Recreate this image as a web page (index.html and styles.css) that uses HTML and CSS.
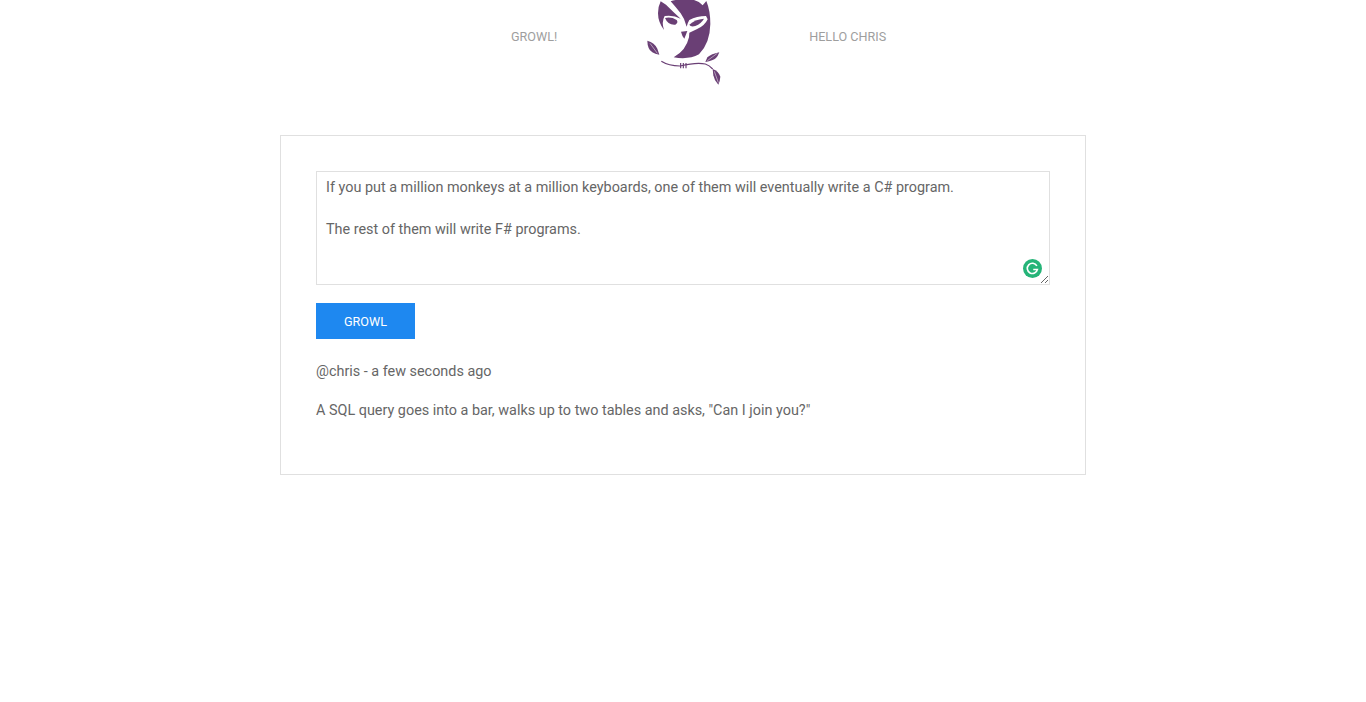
FILE: index.html
```html
<!DOCTYPE html>
<html lang="en">
<head>
  <meta charset="UTF-8">
  <meta name="viewport" content="width=device-width, initial-scale=1">
  <title>Growl</title>
  <link rel="stylesheet" href="styles.css">
</head>
<body>
  <header class="site-header">
    <a class="nav-link" href="#">Growl!</a>
    <svg class="logo" viewBox="0 0 330 285" aria-label="Owl logo">
      <path class="owl" d="M92 4 L108 14 Q130 36 152 56 Q130 44 104 48 Q94 66 102 90 Q84 66 84 40 Q84 20 92 4 Z"/>
      <path class="owl" d="M122 4 Q150 -6 192 0 Q208 4 218 16 L229 3 Q241 32 241 72 Q240 130 207 163 Q176 180 131 172 Q168 152 177 112 L178 98 L200 88 Q224 78 233 58 L228 48 Q200 48 178 60 Q172 70 170 80 Q164 56 152 40 Q138 22 122 4 Z"/>
      <path class="owl" d="M105 54 Q124 50 140 60 Q146 68 136 74 Q114 76 105 54 Z"/>
      <path class="owl" d="M178 74 Q194 58 222 56 Q214 70 196 78 Q182 82 178 74 Z"/>
      <path class="owl" d="M153 95 L172 93 L163 116 Q156 108 153 95 Z"/>
      <path class="owl" d="M52 122 Q74 128 82 146 L88 164 Q62 160 56 144 Q52 134 52 122 Z"/>
      <path class="owl" d="M268 157 Q244 162 232 172 L226 186 Q250 182 258 174 Q264 168 268 157 Z"/>
      <path class="owl" d="M248 207 Q266 214 271 230 Q270 244 265 254 Q252 240 250 226 Z"/>
      <path class="owl-vein" d="M60 130 L82 160 M262 160 L232 182 M253 214 L265 248"/>
      <path class="owl-line" d="M94 184 Q116 198 150 198 Q200 186 226 192 Q238 196 248 207"/>
      <path class="owl-line" d="M152 189 V205 M160 189 V205 M168 189 V205"/>
    </svg>
    <a class="nav-link nav-user" href="#">Hello Chris</a>
  </header>

  <main class="card">
    <form class="growl-form">
      <div class="editor">
        <textarea class="growl-input">If you put a million monkeys at a million keyboards, one of them will eventually write a C# program.

The rest of them will write F# programs.</textarea>
        <svg class="grammarly" viewBox="0 0 20 20" aria-hidden="true">
          <circle cx="10" cy="10" r="10" fill="#25b478"/>
          <path d="M14.6 7.2 A5.4 5.4 0 1 0 15.2 11 H10.8" fill="none" stroke="#fff" stroke-width="1.7"/>
        </svg>
      </div>
      <button class="btn" type="submit">Growl</button>
    </form>

    <p class="post-meta">@chris - a few seconds ago</p>
    <p class="post-body">A SQL query goes into a bar, walks up to two tables and asks, "Can I join you?"</p>
  </main>
</body>
</html>
```

FILE: styles.css
```css
body {
  margin: 0;
  background: #fff;
  color: #666;
  font-family: Roboto, sans-serif;
  font-size: 14.4px;
}

.site-header {
  display: flex;
  align-items: flex-start;
  width: 806px;
  height: 135px;
  margin: 0 auto;
  padding-left: 231px;
  box-sizing: border-box;
}

.nav-link {
  margin-top: 29px;
  color: #9e9e9e;
  font-size: 12.6px;
  line-height: 16px;
  text-decoration: none;
  text-transform: uppercase;
}

.logo {
  width: 110px;
  height: 95px;
  margin: 0 69px 0 73px;
}

.owl {
  fill: #6a3f75;
}

.owl-vein {
  fill: none;
  stroke: #fff;
  stroke-width: 1.5;
}

.owl-line {
  fill: none;
  stroke: #6a3f75;
  stroke-width: 3.5;
}

.card {
  width: 806px;
  height: 340px;
  margin: 0 auto;
  padding: 35px;
  border: 1px solid #e0e0e0;
  box-sizing: border-box;
}

.editor {
  position: relative;
  height: 114px;
}

.growl-input {
  display: block;
  width: 100%;
  height: 114px;
  padding: 5px 9px;
  border: 1px solid #e0e0e0;
  box-sizing: border-box;
  color: #666;
  font-family: Roboto, sans-serif;
  font-size: 14.4px;
  line-height: 21px;
  outline: none;
}

.grammarly {
  position: absolute;
  right: 8px;
  bottom: 7px;
  width: 19px;
  height: 19px;
}

.btn {
  display: block;
  width: 99px;
  height: 36px;
  margin-top: 18px;
  padding: 1px 0 0;
  border: none;
  background: #1e88f0;
  color: #fff;
  font-family: Roboto, sans-serif;
  font-size: 12.6px;
  text-transform: uppercase;
  cursor: pointer;
}

.post-meta {
  margin: 22px 0 0;
  line-height: 21px;
}

.post-body {
  margin: 18px 0 0;
  line-height: 21px;
}
```
